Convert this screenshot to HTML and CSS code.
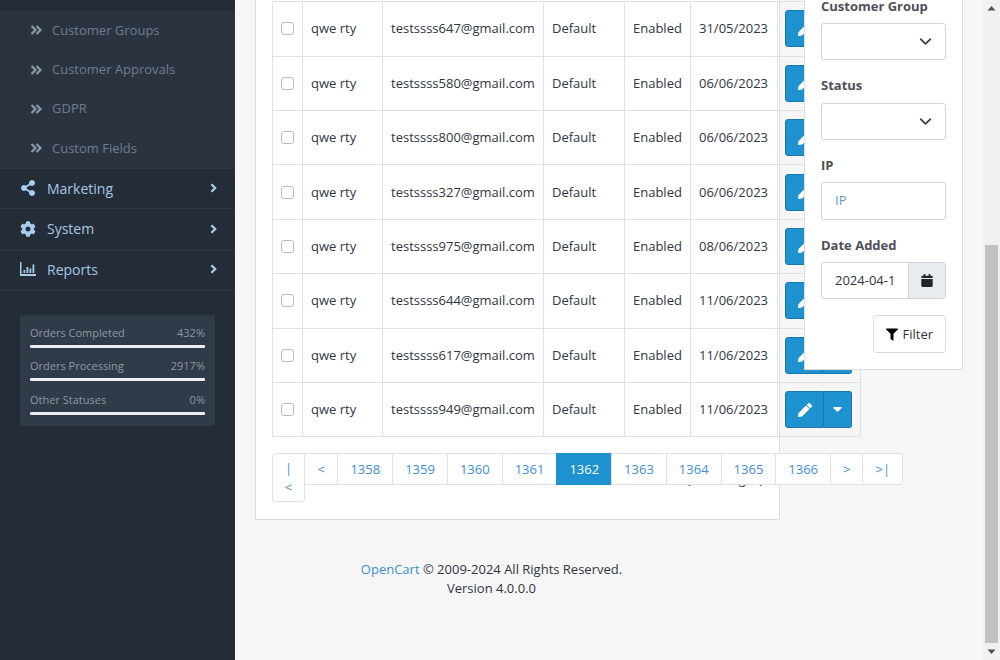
FILE: index.html
```html
<!DOCTYPE html>
<html lang="en">

<head>
    <meta charset="UTF-8">
    <title>Customers</title>
    <link rel="stylesheet" href="styles.css">
</head>

<body>
    <svg class="defs" width="0" height="0">
        <symbol id="i-pencil" viewBox="0 0 512 512"><path d="M497.9 142.1l-46.1 46.1c-4.7 4.7-12.3 4.7-17 0l-111-111c-4.7-4.7-4.7-12.3 0-17l46.1-46.1c18.7-18.7 49.1-18.7 67.9 0l60.1 60.1c18.8 18.7 18.8 49.1 0 67.9zM284.2 99.8L21.6 362.4.4 483.9c-2.9 16.4 11.4 30.6 27.8 27.8l121.5-21.3 262.6-262.6c4.7-4.7 4.7-12.3 0-17l-111-111c-4.8-4.7-12.4-4.7-17.1 0z"/></symbol>
        <symbol id="i-caret" viewBox="0 0 12 7"><path d="M1 0h10c.8 0 1.200 1 .6 1.600L6.600 6.500c-.3.3-.9.3-1.200 0L.4 1.600C-.2 1 .2 0 1 0z"/></symbol>
        <symbol id="i-angles" viewBox="0 0 12 10"><path d="M1.500 1l4 4-4 4M6.500 1l4 4-4 4" fill="none" stroke="currentColor" stroke-width="2.200"/></symbol>
        <symbol id="i-chevron" viewBox="0 0 8 12"><path d="M1.500 1.500L6 6l-4.500 4.500" fill="none" stroke="currentColor" stroke-width="2.800"/></symbol>
        <symbol id="i-down" viewBox="0 0 16 16"><path d="M2 5l6 6 6-6" fill="none" stroke="currentColor" stroke-width="2" stroke-linecap="round" stroke-linejoin="round"/></symbol>
    </svg>

    <nav class="sidebar">
        <div class="menu-top"></div>
        <ul class="submenu">
            <li><svg class="sub-icon"><use href="#i-angles"/></svg>Customer Groups</li>
            <li><svg class="sub-icon"><use href="#i-angles"/></svg>Customer Approvals</li>
            <li><svg class="sub-icon"><use href="#i-angles"/></svg>GDPR</li>
            <li><svg class="sub-icon"><use href="#i-angles"/></svg>Custom Fields</li>
        </ul>
        <ul class="menu">
            <li>
                <svg class="menu-icon" viewBox="0 0 448 512"><path d="M352 320c-22.608 0-43.387 7.819-59.79 20.895l-102.486-64.054a96.551 96.551 0 0 0 0-41.683l102.486-64.054C308.613 184.181 329.392 192 352 192c53.019 0 96-42.981 96-96S405.019 0 352 0s-96 42.981-96 96c0 7.158.79 14.13 2.276 20.841L155.79 180.895C139.387 167.819 118.608 160 96 160c-53.019 0-96 42.981-96 96s42.981 96 96 96c22.608 0 43.387-7.819 59.79-20.895l102.486 64.054A96.301 96.301 0 0 0 256 416c0 53.019 42.981 96 96 96s96-42.981 96-96-42.981-96-96-96z"/></svg>
                <span class="menu-label">Marketing</span>
                <svg class="menu-arrow"><use href="#i-chevron"/></svg>
            </li>
            <li>
                <svg class="menu-icon" viewBox="0 0 512 512"><path d="M487.4 315.7l-42.6-24.6c4.300-23.200 4.300-47 0-70.200l42.600-24.600c4.900-2.800 7.100-8.600 5.500-14-11.100-35.600-30-67.800-54.700-94.600-3.800-4.100-10-5.100-14.800-2.300L380.800 110c-17.900-15.400-38.500-27.300-60.800-35.100V25.800c0-5.600-3.900-10.500-9.400-11.700-36.700-8.200-74.300-7.800-109.200 0-5.500 1.200-9.400 6.100-9.400 11.700V75c-22.200 7.900-42.800 19.800-60.800 35.100L88.700 85.500c-4.900-2.800-11-1.900-14.800 2.300-24.700 26.700-43.600 58.900-54.700 94.600-1.700 5.400.6 11.200 5.500 14L67.300 221c-4.300 23.200-4.300 47 0 70.200l-42.600 24.600c-4.900 2.800-7.100 8.600-5.500 14 11.100 35.600 30 67.800 54.700 94.600 3.800 4.100 10 5.100 14.800 2.300l42.600-24.600c17.900 15.400 38.500 27.300 60.800 35.100v49.200c0 5.600 3.900 10.500 9.400 11.700 36.700 8.200 74.300 7.800 109.200 0 5.500-1.200 9.400-6.100 9.400-11.700v-49.200c22.200-7.900 42.800-19.800 60.800-35.100l42.600 24.600c4.900 2.800 11 1.900 14.800-2.300 24.700-26.700 43.600-58.900 54.700-94.600 1.500-5.500-.7-11.300-5.600-14.100zM256 336c-44.100 0-80-35.900-80-80s35.900-80 80-80 80 35.900 80 80-35.900 80-80 80z"/></svg>
                <span class="menu-label">System</span>
                <svg class="menu-arrow"><use href="#i-chevron"/></svg>
            </li>
            <li>
                <svg class="menu-icon" viewBox="0 0 16 14"><path d="M0 0h1.500v12H16v2H0zM3.500 8h1.800v3H3.500zM6.500 5h1.800v6H6.500zM9.500 6.500h1.800V11H9.500zM12.500 2.500h1.800V11h-1.800z"/></svg>
                <span class="menu-label">Reports</span>
                <svg class="menu-arrow"><use href="#i-chevron"/></svg>
            </li>
        </ul>
        <div class="stats">
            <div class="stat"><div class="stat-text"><span>Orders Completed</span><span>432%</span></div><div class="stat-bar"></div></div>
            <div class="stat"><div class="stat-text"><span>Orders Processing</span><span>2917%</span></div><div class="stat-bar"></div></div>
            <div class="stat"><div class="stat-text"><span>Other Statuses</span><span>0%</span></div><div class="stat-bar"></div></div>
        </div>
    </nav>

    <main class="content">
        <section class="card">
            <table class="customers">
                <colgroup><col class="c-check"><col class="c-name"><col class="c-email"><col class="c-group"><col class="c-status"><col class="c-date"><col class="c-action"></colgroup>
                <tbody>
                    <tr><td><span class="check"></span></td><td>qwe rty</td><td>testssss647@gmail.com</td><td>Default</td><td>Enabled</td><td>31/05/2023</td><td><div class="btn-group"><span class="btn-edit"><svg class="pencil"><use href="#i-pencil"/></svg></span><span class="btn-more"><svg class="caret"><use href="#i-caret"/></svg></span></div></td></tr>
                    <tr><td><span class="check"></span></td><td>qwe rty</td><td>testssss580@gmail.com</td><td>Default</td><td>Enabled</td><td>06/06/2023</td><td><div class="btn-group"><span class="btn-edit"><svg class="pencil"><use href="#i-pencil"/></svg></span><span class="btn-more"><svg class="caret"><use href="#i-caret"/></svg></span></div></td></tr>
                    <tr><td><span class="check"></span></td><td>qwe rty</td><td>testssss800@gmail.com</td><td>Default</td><td>Enabled</td><td>06/06/2023</td><td><div class="btn-group"><span class="btn-edit"><svg class="pencil"><use href="#i-pencil"/></svg></span><span class="btn-more"><svg class="caret"><use href="#i-caret"/></svg></span></div></td></tr>
                    <tr><td><span class="check"></span></td><td>qwe rty</td><td>testssss327@gmail.com</td><td>Default</td><td>Enabled</td><td>06/06/2023</td><td><div class="btn-group"><span class="btn-edit"><svg class="pencil"><use href="#i-pencil"/></svg></span><span class="btn-more"><svg class="caret"><use href="#i-caret"/></svg></span></div></td></tr>
                    <tr><td><span class="check"></span></td><td>qwe rty</td><td>testssss975@gmail.com</td><td>Default</td><td>Enabled</td><td>08/06/2023</td><td><div class="btn-group"><span class="btn-edit"><svg class="pencil"><use href="#i-pencil"/></svg></span><span class="btn-more"><svg class="caret"><use href="#i-caret"/></svg></span></div></td></tr>
                    <tr><td><span class="check"></span></td><td>qwe rty</td><td>testssss644@gmail.com</td><td>Default</td><td>Enabled</td><td>11/06/2023</td><td><div class="btn-group"><span class="btn-edit"><svg class="pencil"><use href="#i-pencil"/></svg></span><span class="btn-more"><svg class="caret"><use href="#i-caret"/></svg></span></div></td></tr>
                    <tr><td><span class="check"></span></td><td>qwe rty</td><td>testssss617@gmail.com</td><td>Default</td><td>Enabled</td><td>11/06/2023</td><td><div class="btn-group"><span class="btn-edit"><svg class="pencil"><use href="#i-pencil"/></svg></span><span class="btn-more"><svg class="caret"><use href="#i-caret"/></svg></span></div></td></tr>
                    <tr><td><span class="check"></span></td><td>qwe rty</td><td>testssss949@gmail.com</td><td>Default</td><td>Enabled</td><td>11/06/2023</td><td><div class="btn-group"><span class="btn-edit"><svg class="pencil"><use href="#i-pencil"/></svg></span><span class="btn-more"><svg class="caret"><use href="#i-caret"/></svg></span></div></td></tr>
                </tbody>
            </table>
            <div class="pager-row">
                <div class="pager-col">
                    <ul class="pagination">
                        <li><a class="page-first">|<br>&lt;</a></li>
                        <li><a class="page-prev">&lt;</a></li>
                        <li><a>1358</a></li>
                        <li><a>1359</a></li>
                        <li><a>1360</a></li>
                        <li><a>1361</a></li>
                        <li><a class="active">1362</a></li>
                        <li><a>1363</a></li>
                        <li><a>1364</a></li>
                        <li><a>1365</a></li>
                        <li><a>1366</a></li>
                        <li><a>&gt;</a></li>
                        <li><a class="page-last">&gt;|</a></li>
                    </ul>
                </div>
                <div class="results">Showing 13611 to 13620 of 13662 (1366 Pages)</div>
            </div>
        </section>

        <aside class="filter">
            <div class="field">
                <label>Customer Group</label>
                <div class="control"><svg class="select-arrow"><use href="#i-down"/></svg></div>
            </div>
            <div class="field">
                <label>Status</label>
                <div class="control"><svg class="select-arrow"><use href="#i-down"/></svg></div>
            </div>
            <div class="field">
                <label>IP</label>
                <div class="control placeholder">IP</div>
            </div>
            <div class="field">
                <label>Date Added</label>
                <div class="input-group">
                    <div class="date-value">2024-04-15</div>
                    <div class="date-addon">
                        <svg class="calendar" viewBox="0 0 14 16"><path d="M3 0h2v2h4V0h2v2h1.500C13.300 2 14 2.700 14 3.500V5H0V3.500C0 2.700.7 2 1.500 2H3zM0 6h14v8.500c0 .8-.7 1.500-1.500 1.500h-11C.7 16 0 15.300 0 14.500z"/></svg>
                    </div>
                </div>
            </div>
            <div class="filter-foot">
                <span class="btn-filter">
                    <svg class="funnel" viewBox="0 0 512 512"><path d="M487.976 0H24.028C2.710 0-8.047 25.866 7.058 40.971L192 225.941V432c0 7.831 3.821 15.170 10.237 19.662l80 55.980C298.020 518.690 320 507.493 320 487.980V225.941l184.947-184.970C520.021 25.896 509.338 0 487.976 0z"/></svg>Filter
                </span>
            </div>
        </aside>

        <footer class="page-foot">
            <a>OpenCart</a> &copy; 2009-2024 All Rights Reserved.<br>Version 4.0.0.0
        </footer>
    </main>

    <div class="scrollbar">
        <svg class="scroll-btn" viewBox="0 0 17 17"><path d="M4.500 10.500h8l-4-4.500z"/></svg>
        <div class="scroll-track"><div class="scroll-thumb"></div></div>
        <svg class="scroll-btn" viewBox="0 0 17 17"><path d="M4.500 6.500h8l-4 4.500z"/></svg>
    </div>
</body>

</html>
```

FILE: styles.css
```css
* {
    box-sizing: border-box;
}

body {
    display: flex;
    width: 1000px;
    height: 660px;
    margin: 0;
    overflow: hidden;
    background-color: #f6f6f6;
    color: #2f3542;
    font-family: "Open Sans", sans-serif;
    font-size: 13px;
    line-height: 21px;
}

ul {
    margin: 0;
    padding: 0;
    list-style: none;
}

.defs {
    position: absolute;
}

/* sidebar */
.sidebar {
    flex: 0 0 235px;
    background-color: #242c37;
}

.menu-top {
    height: 10.7px;
    border-bottom: 1px solid #2a323e;
}

.submenu {
    background-color: #2b3341;
}

.submenu li {
    display: flex;
    align-items: center;
    height: 39.3px;
    padding-left: 30px;
    color: #6f7c8e;
}

.sub-icon {
    width: 12px;
    height: 10px;
    margin-right: 10px;
    color: #8c99a9;
}

.menu li {
    display: flex;
    align-items: center;
    height: 40.5px;
    padding: 0 0 0.6px 20px;
    border-top: 1px solid #2c3541;
    color: #a7c8e4;
    font-size: 14px;
}

.menu li:last-child {
    height: 41.5px;
    border-bottom: 1px solid #2c3541;
}

.menu-icon {
    width: 16px;
    height: 16px;
    margin-right: 11px;
    fill: #a7cdec;
}

.menu-label {
    flex: 1;
}

.menu-arrow {
    width: 7px;
    height: 10px;
    margin-right: 18px;
    color: #a7cdec;
}

.stats {
    width: 195px;
    margin: 24.6px 0 0 20px;
    padding: 8px 10px 11px;
    border-radius: 2px;
    background-color: #2f3b49;
    color: #8e98a3;
    font-size: 11px;
}

.stat-text {
    display: flex;
    justify-content: space-between;
    margin-bottom: 2px;
    line-height: 20px;
}

.stat-bar {
    height: 3px;
    margin-bottom: 8.5px;
    border-radius: 1px;
    background-color: #eeeeee;
}

.stat:last-child .stat-bar {
    margin-bottom: 0;
}

/* main column */
.content {
    position: relative;
    flex: 1;
    min-width: 0;
}

.card {
    width: 525px;
    margin-left: 20px;
    padding: 1.2px 16px 24px;
    border: 1px solid #dddddd;
    border-top: 0;
    background-color: #ffffff;
}

.customers {
    width: 588px;
    border-collapse: collapse;
    table-layout: fixed;
}

.customers tr {
    height: 54.4px;
}

.customers td {
    padding: 0 8px;
    border: 1px solid #dfe1e6;
    white-space: nowrap;
}

.c-check { width: 30px; }
.c-name { width: 80px; }
.c-email { width: 161px; }
.c-group { width: 81px; }
.c-status { width: 66px; }
.c-date { width: 87px; }
.c-action { width: 83px; }

.check {
    display: block;
    width: 13px;
    height: 13px;
    border: 1px solid #b9bcc2;
    border-radius: 3px;
    background-color: #ffffff;
}

.btn-group {
    display: flex;
    width: 67px;
    height: 37px;
    margin-left: -1px;
}

.btn-edit,
.btn-more {
    display: flex;
    align-items: center;
    justify-content: center;
    border: 1px solid #1978ab;
    background-color: #1e91cf;
}

.btn-edit {
    width: 39px;
    border-radius: 3px 0 0 3px;
}

.btn-more {
    flex: 1;
    border-left: 0;
    border-radius: 0 3px 3px 0;
}

.pencil {
    width: 14px;
    height: 14px;
    fill: #ffffff;
}

.caret {
    width: 9px;
    height: 5px;
    fill: #ffffff;
}

.pager-row {
    display: flex;
    margin-top: 16px;
    height: 42px;
}

.pager-col {
    flex: 0 0 50%;
    min-width: 0;
    position: relative;
    z-index: 1;
}

.pagination {
    display: flex;
    align-items: flex-start;
    width: 631px;
}

.pagination a {
    display: block;
    margin-left: -1px;
    padding: 5px 12px;
    border: 1px solid #dfe1e6;
    background-color: #ffffff;
    color: #3d8fd1;
    line-height: 20px;
}

.pagination li:first-child a {
    margin-left: 0;
    border-radius: 3px 0 3px 3px;
}

.pagination .page-first {
    width: 33px;
    padding: 5px 0;
    line-height: 18.5px;
    text-align: center;
}

.pagination .page-prev {
    padding: 5px 12.5px;
}

.pagination .page-last {
    border-radius: 0 3px 3px 0;
}

.pagination .active {
    border-color: #1e91cf;
    background-color: #1e91cf;
    color: #ffffff;
}

.results {
    flex: 0 0 50%;
    margin-top: -5px;
    padding-left: 12px;
    text-align: right;
}

/* filter panel, lies over the table */
.filter {
    position: absolute;
    top: -21.2px;
    left: 569px;
    width: 159px;
    height: 391.2px;
    padding: 16px;
    border: 1px solid #dddddd;
    background-color: #ffffff;
}

.field {
    margin-bottom: 15px;
}

.field label {
    display: block;
    margin-bottom: 6.2px;
    color: #4e5058;
    font-weight: 700;
}

.control {
    display: flex;
    align-items: center;
    justify-content: flex-end;
    height: 37.4px;
    padding: 0 13px;
    border: 1px solid #ced4da;
    border-radius: 3px;
}

.select-arrow {
    width: 13px;
    height: 13px;
    color: #343a40;
}

.placeholder {
    justify-content: flex-start;
    color: #5f9bd0;
}

.input-group {
    display: flex;
    height: 37.4px;
    border: 1px solid #ced4da;
    border-radius: 3px;
}

.date-value {
    width: 61px;
    margin: 0 12px 0 13px;
    overflow: hidden;
    line-height: 35px;
    white-space: nowrap;
}

.date-addon {
    display: flex;
    flex: 1;
    align-items: center;
    justify-content: center;
    border-left: 1px solid #ced4da;
    background-color: #e9ecef;
}

.calendar {
    width: 12px;
    height: 13px;
    fill: #212529;
}

.filter-foot {
    display: flex;
    justify-content: flex-end;
    margin-top: 16px;
}

.btn-filter {
    display: flex;
    align-items: center;
    height: 38px;
    padding: 0 12px;
    border: 1px solid #dddddd;
    border-radius: 3px;
}

.funnel {
    width: 12px;
    height: 13px;
    margin-right: 4px;
}

.page-foot {
    padding: 40px 235px 0 0;
    text-align: center;
    line-height: 19px;
}

.page-foot a {
    color: #3d8fd1;
}

/* window scrollbar */
.scrollbar {
    display: flex;
    flex: 0 0 17px;
    flex-direction: column;
    background-color: #f1f1f1;
}

.scroll-btn {
    flex: 0 0 17px;
    fill: #505050;
}

.scroll-track {
    display: flex;
    flex: 1;
    flex-direction: column;
    justify-content: flex-end;
    padding: 0 2px;
}

.scroll-thumb {
    height: 398px;
    background-color: #c1c1c1;
}
```
